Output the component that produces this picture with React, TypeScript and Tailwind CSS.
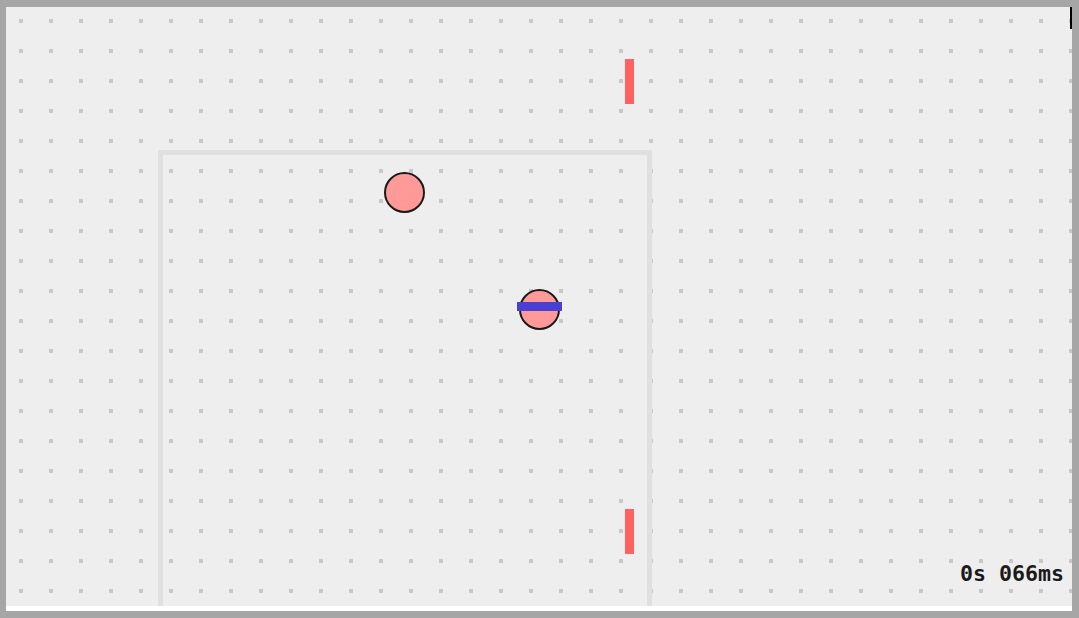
export default function App() {
  return (
    <div className="w-[1079px] h-[618px] bg-[#a6a6a6] pt-[7px] pl-[6px] pr-[7px] pb-[7px] overflow-hidden">
      <div className="relative w-[1066px] h-[604px] bg-[#eeeeee] border-b-[5px] border-white overflow-hidden">
        {/* dot grid */}
        <svg className="absolute inset-0" width="1066" height="599">
          <defs>
            <pattern id="dots" x="13" y="12" width="30" height="30" patternUnits="userSpaceOnUse">
              <rect x="0" y="0" width="4" height="4" fill="#c9c9c9" />
            </pattern>
          </defs>
          <rect width="1066" height="599" fill="url(#dots)" />
        </svg>

        {/* boundary */}
        <div className="absolute left-[152px] top-[143px] w-[494px] h-[480px] border-[5px] border-[#e0e0e0] blur-[0.6px]" />

        {/* walls */}
        <div className="absolute left-[619px] top-[52px] w-[9px] h-[45px] bg-[#ff6262]" />
        <div className="absolute left-[619px] top-[502px] w-[9px] h-[45px] bg-[#ff6262]" />

        {/* balls */}
        <div className="absolute left-[378px] top-[165px] w-[41px] h-[41px] rounded-full bg-[#ff9a98] border-2 border-[#1a1a1a]" />
        <div className="absolute left-[513px] top-[282px] w-[41px] h-[41px] rounded-full bg-[#ff9a98] border-2 border-[#1a1a1a]" />
        <div className="absolute left-[511px] top-[295px] w-[45px] h-[9px] bg-[#4a3fd3]" />

        {/* cursor mark */}
        <div className="absolute left-[1064px] top-0 w-[2px] h-[22px] bg-black" />

        {/* timer */}
        <div className="absolute right-[8px] bottom-[21px] font-['DejaVu_Sans_Mono',monospace] text-[21.6px] leading-none font-bold text-[#1a1a1a]">
          0s 066ms
        </div>
      </div>
    </div>
  );
}
